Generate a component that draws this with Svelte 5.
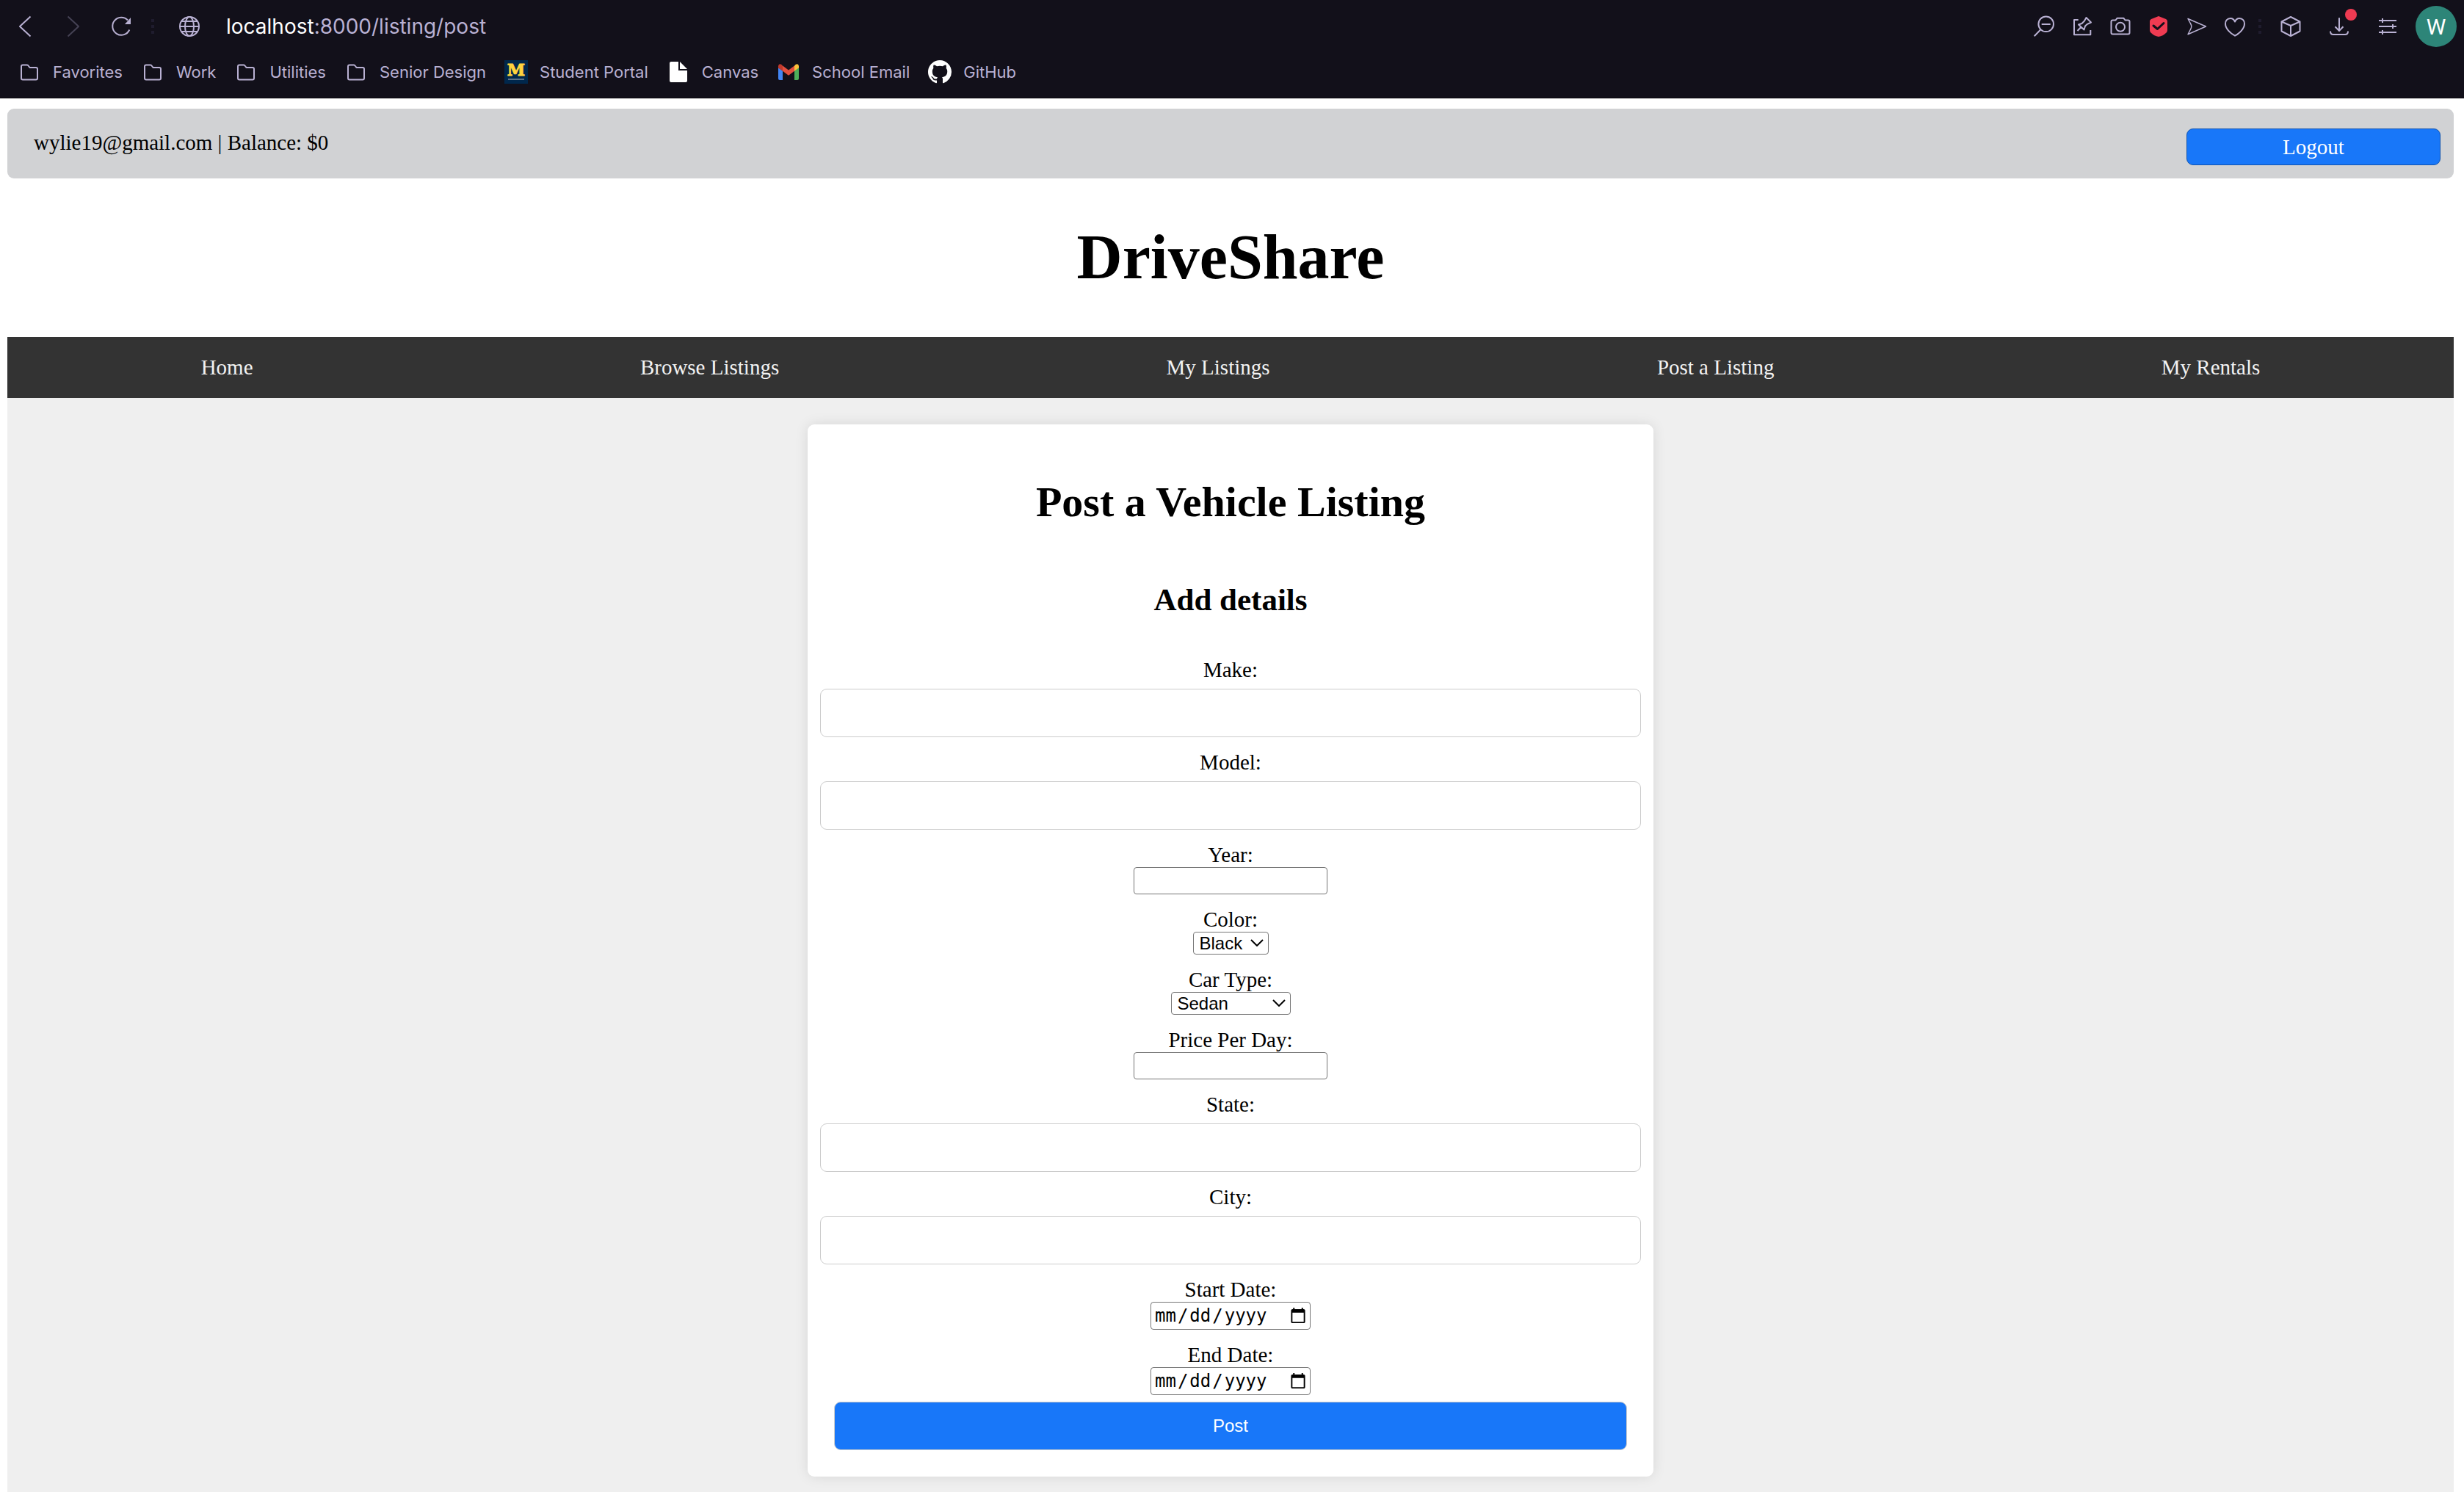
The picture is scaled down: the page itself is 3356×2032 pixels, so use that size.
<script>
  const links = ['Home', 'Browse Listings', 'My Listings', 'Post a Listing', 'My Rentals'];

  const bookmarks = [
    { label: 'Favorites', icon: 'folder' },
    { label: 'Work', icon: 'folder' },
    { label: 'Utilities', icon: 'folder' },
    { label: 'Senior Design', icon: 'folder' },
    { label: 'Student Portal', icon: 'portal' },
    { label: 'Canvas', icon: 'page' },
    { label: 'School Email', icon: 'mail' },
    { label: 'GitHub', icon: 'github' }
  ];

  const fields = [
    { id: 'make', label: 'Make:', type: 'text' },
    { id: 'model', label: 'Model:', type: 'text' },
    { id: 'year', label: 'Year:', type: 'number' },
    { id: 'color', label: 'Color:', type: 'select', options: ['Black', 'White', 'Red', 'Blue'] },
    { id: 'type', label: 'Car Type:', type: 'select', options: ['Sedan', 'SUV', 'Truck', 'Convertible'] },
    { id: 'price', label: 'Price Per Day:', type: 'number' },
    { id: 'state', label: 'State:', type: 'text' },
    { id: 'city', label: 'City:', type: 'text' },
    { id: 'start', label: 'Start Date:', type: 'date' },
    { id: 'end', label: 'End Date:', type: 'date' }
  ];
</script>

<div class="page">
  <div class="browser">
    <div class="toolbar">
      <div class="group nav-icons">
        <button class="icon" aria-label="Back"><svg viewBox="0 0 32 32"><path d="M23.500 2.500L9 16L23.500 29.500" /></svg></button>
        <button class="icon dim" aria-label="Forward" disabled><svg viewBox="0 0 32 32"><path d="M8.500 2.500L23 16L8.500 29.500" /></svg></button>
        <button class="icon" aria-label="Reload"><svg viewBox="0 0 32 32"><path d="M26.300 20.500A12 12 0 1 1 24 7.500" /><path class="solid" d="M28 4V13H20Z" /></svg></button>
      </div>
      <span class="dots"><i></i><i></i><i></i></span>
      <button class="icon" aria-label="Site information">
        <svg viewBox="0 0 32 32"><circle cx="16" cy="16" r="13" /><ellipse cx="16" cy="16" rx="6" ry="13" /><path d="M3 16H29M5 9H27M5 23H27" /></svg>
      </button>
      <button class="url"><b>localhost</b>:8000/listing/post</button>

      <div class="group tools">
        <button class="icon" aria-label="Zoom"><svg viewBox="0 0 32 32"><circle cx="18.700" cy="12.800" r="10.300" /><path d="M12.700 13H24.700M11.400 20.300L2.700 29.300" /></svg></button>
        <button class="icon" aria-label="Pin"><svg viewBox="0 0 32 32"><path d="M10.700 7H5V27.300H27.300V21" /><path d="M9.500 22L14.500 16.800M11 13.500L18.500 20.500L20 15.500L23 12.800L28 10.500L21.500 4L19 8.500L15.500 12Z" /></svg></button>
        <button class="icon" aria-label="Snapshot"><svg viewBox="0 0 32 32"><path d="M5.500 7.500H9.500L11.500 4.800H20.500L22.500 7.500H26.500Q28.500 7.500 28.500 9.500V24.500Q28.500 26.500 26.500 26.500H5.500Q3.500 26.500 3.500 24.500V9.500Q3.500 7.500 5.500 7.500Z" /><circle cx="16" cy="16.700" r="6" /></svg></button>
        <button class="icon" aria-label="Ad blocker"><svg viewBox="0 0 32 32"><path class="red" d="M16 2L26 6Q28 7 28 9V21Q28 23 26.500 24.500Q22 29 16 30Q10 29 5.500 24.500Q4 23 4 21V9Q4 7 6 6Z" /><path class="tick" d="M9 15L14.500 19.500L23 11.500" /></svg></button>
        <button class="icon" aria-label="Send"><svg viewBox="0 0 32 32"><path class="thin" d="M4 5.500L28.500 16L4 26.800L7.500 20Q10 16 7.500 12Z" /></svg></button>
        <button class="icon" aria-label="Favourite"><svg viewBox="0 0 32 32"><path d="M16 9.500C14 5 11 5 10 5C5 5 3 9 3 12.500C3 19 10 25.500 16 28.700C22 25.500 29 19 29 12.500C29 9 27 5 22 5C21 5 18 5 16 9.500Z" /></svg></button>
      </div>
      <span class="dots"><i></i><i></i><i></i></span>
      <div class="group extras">
        <button class="icon" aria-label="Extensions"><svg viewBox="0 0 32 32"><path d="M16 3L28.500 9.500V22.500L16 29L3.500 22.500V9.500ZM3.500 9.500L16 15L28.500 9.500M16 15V29" /></svg></button>
        <button class="icon" aria-label="Downloads"><svg viewBox="0 0 32 32"><path d="M16 4.300V21.500M10.500 16.300L16 22L21.500 16.300M4 22.500Q4 27 8 27H24Q28 27 28 22.500" /></svg><span class="badge"></span></button>
        <button class="icon" aria-label="Setup"><svg viewBox="0 0 32 32"><path d="M4 8H28M4 16H28M4 24H28M9 5V11M23 13V19M9 21V27" /></svg></button>
      </div>
      <button class="avatar">W</button>
    </div>

    <div class="bookmarks">
      {#each bookmarks as b}
        <a href="#{b.icon}">
          {#if b.icon === 'folder'}
            <svg viewBox="0 0 32 32"><path d="M7 6.500H13Q14 6.500 15 8L16.500 10H25Q27 10 27 12V24.500Q27 26.500 25 26.500H7Q5 26.500 5 24.500V8.500Q5 6.500 7 6.500Z" /></svg>
          {:else if b.icon === 'portal'}
            <svg viewBox="0 0 32 32"><rect class="navy" width="32" height="32" /><text x="16" y="21" text-anchor="middle">M</text><path class="line" d="M5 26H27" /></svg>
          {:else if b.icon === 'page'}
            <svg viewBox="0 0 32 32"><path class="white" d="M6 2H16V14H28V28Q28 30 26 30H6Q4 30 4 28V4Q4 2 6 2ZM18 2L28 12H18Z" /></svg>
          {:else if b.icon === 'mail'}
            <svg viewBox="0 0 32 32">
              <path class="g-blue" d="M2 10L8 14.500V27H4Q2 27 2 25Z" />
              <path class="g-green" d="M30 10L24 14.500V27H28Q30 27 30 25Z" />
              <path class="g-red" d="M8 7.500L16 13.500L24 7.500V14.700L16 20.700L8 14.700Z" />
              <path class="g-dark" d="M2 10.500V8Q2.500 4 6.500 6L8 7.500V14.700Z" />
              <path class="g-yellow" d="M30 10.500V8Q29.500 4 25.500 6L24 7.500V14.700Z" />
            </svg>
          {:else}
            <svg viewBox="0 0 16 16"><path class="white" d="M8 0C3.580 0 0 3.580 0 8c0 3.540 2.290 6.530 5.470 7.590.4.070.55-.17.55-.38 0-.19-.01-.82-.01-1.490-2.010.37-2.530-.49-2.690-.94-.09-.23-.48-.94-.82-1.130-.28-.15-.68-.52-.01-.53.63-.01 1.080.58 1.230.82.72 1.210 1.870.87 2.330.66.07-.52.28-.87.51-1.070-1.780-.2-3.640-.89-3.640-3.950 0-.87.31-1.590.82-2.150-.08-.2-.36-1.020.08-2.120 0 0 .67-.21 2.200.82.64-.18 1.320-.27 2-.27s1.360.09 2 .27c1.530-1.040 2.200-.82 2.200-.82.44 1.100.16 1.920.08 2.120.51.56.82 1.270.82 2.150 0 3.070-1.870 3.750-3.650 3.950.29.25.54.73.54 1.480 0 1.070-.01 1.930-.01 2.200 0 .21.15.46.55.38A8.010 8.010 0 0 0 16 8c0-4.420-3.580-8-8-8z" /></svg>
          {/if}
          <span>{b.label}</span>
        </a>
      {/each}
    </div>
  </div>

  <div class="site">
    <header>
      <span>wylie19@gmail.com | Balance: $0</span>
      <button>Logout</button>
    </header>
    <h1 class="brand">DriveShare</h1>
    <nav>
      {#each links as link}
        <a href="#{link}">{link}</a>
      {/each}
    </nav>
    <main>
      <form onsubmit={(e) => e.preventDefault()}>
        <h1>Post a Vehicle Listing</h1>
        <h2>Add details</h2>
        <div class="fields">
          {#each fields as f}
            <div class="field">
              <label for={f.id}>{f.label}</label>
              {#if f.type === 'select'}
                <span class="select">
                  <select id={f.id}>
                    {#each f.options as o}<option>{o}</option>{/each}
                  </select>
                  <svg viewBox="0 0 18 10"><path d="M1 1L9 9L17 1" /></svg>
                </span>
              {:else}
                <input id={f.id} type={f.type} class={f.type} />
              {/if}
            </div>
          {/each}
        </div>
        <button class="submit">Post</button>
      </form>
    </main>
  </div>
</div>

<style>
  .page {
    display: flex;
    flex-direction: column;
    min-height: 100vh;
    background: #fff;
    color: #000;
    font-family: 'Liberation Serif', serif;
    font-size: 29px;
    line-height: 33px;
  }
  .page * { box-sizing: border-box; }
  button {
    font: inherit;
    padding: 0;
    border: 0;
    background: none;
    color: inherit;
    cursor: pointer;
  }
  a { color: inherit; text-decoration: none; }
  svg { display: block; }

  .browser {
    height: 134px;
    padding: 8px 10px 0 18px;
    background: #12101a;
    border-bottom: 1px solid #08070c;
    color: #b9b1d3;
    font-family: Inter, 'Liberation Sans', sans-serif;
  }
  .browser svg {
    width: 32px;
    height: 32px;
    fill: none;
    stroke: #b9b1d3;
    stroke-width: 2;
    stroke-linejoin: round;
  }
  .toolbar { display: flex; align-items: center; height: 56px; }
  .group { display: flex; align-items: center; }
  .nav-icons { gap: 34px; }
  .tools { gap: 20px; margin-left: auto; }
  .extras { gap: 34px; margin-right: 22px; }
  .icon { position: relative; width: 32px; height: 32px; flex: none; }
  .browser .dim svg { stroke: #454254; }
  .browser .solid { fill: #b9b1d3; stroke: none; }
  .browser .red { fill: #ef3b52; stroke: none; }
  .browser .tick { stroke: #12101a; stroke-width: 3; stroke-linecap: round; }
  .browser .thin { stroke-width: 1.5; }
  .badge {
    position: absolute;
    top: -8px;
    right: -8px;
    width: 16px;
    height: 16px;
    border-radius: 50%;
    background: #ef3b52;
  }
  .dots { display: grid; gap: 4px; margin: 0 24px 0 16px; }
  .nav-icons + .dots { margin: 0 32px 0 24px; }
  .dots i { width: 4px; height: 4px; background: #1f1c2e; }
  .url { margin-left: 34px; font-size: 28px; white-space: nowrap; }
  .url b { font-weight: 400; color: #fff; }
  .avatar {
    width: 56px;
    height: 56px;
    border-radius: 50%;
    background: #2d8578;
    color: #fff;
    font-family: Roboto, sans-serif;
    font-size: 30px;
  }

  .bookmarks {
    display: flex;
    gap: 25px;
    padding: 18px 6px 0;
    font-size: 22px;
    line-height: 32px;
    white-space: nowrap;
  }
  .bookmarks a { display: flex; align-items: center; gap: 16px; }
  .browser .white { fill: #fff; stroke: none; }
  .browser .navy { fill: #00274c; stroke: none; }
  .browser .line { stroke: #5d7286; }
  .bookmarks text {
    fill: #ffd23c;
    stroke: #ffd23c;
    stroke-width: 1;
    font: 700 22px 'DejaVu Serif', serif;
  }
  .browser .g-blue { fill: #4285f4; stroke: none; }
  .browser .g-green { fill: #4caf5a; stroke: none; }
  .browser .g-red { fill: #e2503f; stroke: none; }
  .browser .g-dark { fill: #c0392b; stroke: none; }
  .browser .g-yellow { fill: #fbc13a; stroke: none; }

  .site {
    flex: 1;
    display: flex;
    flex-direction: column;
    padding: 14px 14px 0 10px;
  }
  header {
    display: flex;
    justify-content: space-between;
    align-items: flex-start;
    padding: 27px 18px 18px 36px;
    border-radius: 9px;
    background: #d1d2d4;
  }
  header span { line-height: 38px; }
  header button {
    width: 346px;
    height: 50px;
    border: 1px solid #1054b0;
    border-radius: 9px;
    background: #1877f9;
    color: #fff;
  }
  h1, h2 { margin: 0; font-weight: 700; text-align: center; }
  .brand { padding: 58px 0 60px; font-size: 86px; line-height: 98px; }
  nav {
    display: flex;
    justify-content: space-around;
    background: #333;
    color: #f2f2f2;
    line-height: 83px;
  }
  main {
    flex: 1;
    padding: 36px 36px 20px;
    background: #efefef;
  }
  form {
    display: flex;
    flex-direction: column;
    max-width: 1152px;
    margin: 0 auto;
    padding: 73px 17px 36px;
    border-radius: 9px;
    background: #fff;
    box-shadow: 0 0 18px rgba(0, 0, 0, 0.1);
  }
  form h1 { font-size: 58px; line-height: 66px; }
  form h2 { margin: 75px 0 54px; font-size: 43px; line-height: 50px; }
  .fields { display: flex; flex-direction: column; gap: 18px; }
  .field { display: flex; flex-direction: column; align-items: center; }
  input {
    margin: 0;
    border: 1px solid #767676;
    border-radius: 4px;
    background: #fff;
    color: #000;
    font: 24px 'Liberation Sans', sans-serif;
  }
  .text {
    width: 100%;
    height: 66px;
    margin-top: 9px;
    padding: 0 18px;
    border-color: #ccc;
    border-radius: 9px;
  }
  .number { width: 264px; height: 37px; }
  .date {
    width: 218px;
    height: 38px;
    padding: 0 2px 0 4px;
    font: 24px 'DejaVu Sans Mono', monospace;
  }
  .date::-webkit-datetime-edit-text { padding: 0 1px; }
  .select { position: relative; display: flex; }
  select {
    height: 31px;
    padding: 0 31px 0 8px;
    border: 1px solid #767676;
    border-radius: 4px;
    appearance: none;
    background: #fff;
    color: #000;
    font: 24px/29px 'Liberation Sans', sans-serif;
  }
  .select svg {
    position: absolute;
    top: 10px;
    right: 7px;
    width: 18px;
    height: 10px;
    fill: none;
    stroke: #000;
    stroke-width: 2;
    pointer-events: none;
  }
  .submit {
    height: 66px;
    margin: 9px 19px 0;
    border: 1px solid #ccc;
    border-radius: 9px;
    background: #1877f9;
    color: #fff;
    font: 24px 'Liberation Sans', sans-serif;
  }
</style>
